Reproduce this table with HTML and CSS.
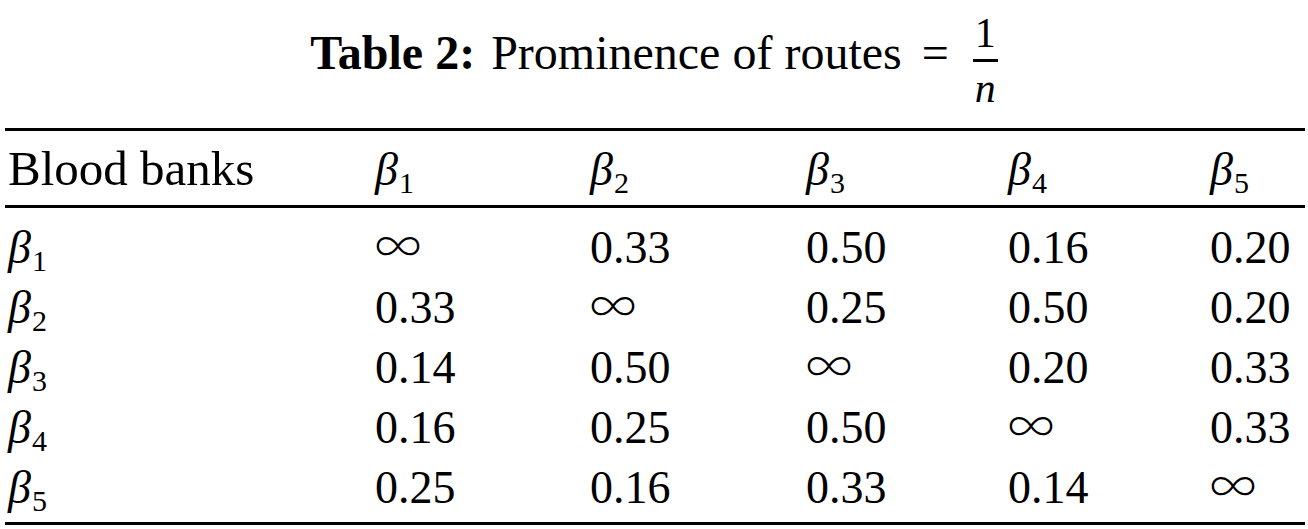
FILE: index.html
```html
<!DOCTYPE html>
<html lang="en">
<head>
<meta charset="utf-8">
<title>Table 2</title>
<link rel="stylesheet" href="styles.css">
</head>
<body>
<div class="page">
  <div class="caption">
    <span class="label">Table 2:</span>
    <span class="ctext">Prominence of routes</span>
    <span class="eq">=</span>
    <span class="frac"><span class="num">1</span><span class="den">n</span></span>
  </div>
  <table class="data">
    <thead>
      <tr>
        <th class="c1"><span class="word">Blood banks</span></th>
        <th class="c2"><i>β</i><sub>1</sub></th>
        <th class="c3"><i>β</i><sub>2</sub></th>
        <th class="c4"><i>β</i><sub>3</sub></th>
        <th class="c5"><i>β</i><sub>4</sub></th>
        <th class="c6"><i>β</i><sub>5</sub></th>
      </tr>
    </thead>
    <tbody>
      <tr class="first"><td><i>β</i><sub>1</sub></td><td><span class="inf">∞</span></td><td>0.33</td><td>0.50</td><td>0.16</td><td>0.20</td></tr>
      <tr><td><i>β</i><sub>2</sub></td><td>0.33</td><td><span class="inf">∞</span></td><td>0.25</td><td>0.50</td><td>0.20</td></tr>
      <tr><td><i>β</i><sub>3</sub></td><td>0.14</td><td>0.50</td><td><span class="inf">∞</span></td><td>0.20</td><td>0.33</td></tr>
      <tr><td><i>β</i><sub>4</sub></td><td>0.16</td><td>0.25</td><td>0.50</td><td><span class="inf">∞</span></td><td>0.33</td></tr>
      <tr class="last"><td><i>β</i><sub>5</sub></td><td>0.25</td><td>0.16</td><td>0.33</td><td>0.14</td><td><span class="inf">∞</span></td></tr>
    </tbody>
  </table>
</div>
</body>
</html>
```
FILE: styles.css
```css
html, body {
  margin: 0;
  padding: 0;
  background: #ffffff;
}
body {
  font-family: "Liberation Serif", "Times New Roman", serif;
  color: #000;
}
.page {
  width: 1308px;
}
.caption {
  height: 128px;
  box-sizing: border-box;
  padding-top: 19px;
  text-align: center;
  font-size: 48px;
  line-height: 60px;
  white-space: nowrap;
}
.label {
  font-weight: bold;
  margin-right: 4px;
}
.eq {
  margin: 0 12px 0 8px;
}
.frac {
  display: inline-flex;
  flex-direction: column;
  align-items: center;
  vertical-align: 22px;
  font-size: 42px;
}
.frac .num {
  display: block;
  line-height: 28px;
  padding: 0 2px 12px;
  border-bottom: 3px solid #000;
}
.frac .den {
  display: block;
  line-height: 28px;
  font-style: italic;
  padding-top: 12px;
}
.data {
  margin-left: 5px;
  width: 1300px;
  border-collapse: collapse;
  table-layout: fixed;
  font-size: 46px;
  line-height: 60px;
  border-top: 3px solid #000;
  border-bottom: 3px solid #000;
}
.data th, .data td {
  padding: 0;
  text-align: left;
  font-weight: normal;
  white-space: nowrap;
}
.data th {
  border-bottom: 3px solid #000;
  padding-top: 8px;
  padding-bottom: 5px;
}
.data .word {
  font-size: 49px;
}
.data tr.first td { padding-top: 10px; }
.data tr.last td { padding-bottom: 4px; }
.data .c1 { width: 367px; padding-left: 3px; }
.data .c2 { width: 215px; }
.data .c3 { width: 216px; }
.data .c4 { width: 202px; }
.data .c5 { width: 202px; }
.data .c6 { width: auto; }
.data td:first-child { padding-left: 3px; }
.data i {
  font-style: italic;
}
.data sub {
  font-size: 30px;
  vertical-align: -8px;
  line-height: 0;
  margin-left: 1px;
}
.data .inf {
  font-family: "Noto Sans CJK JP", "Liberation Serif", serif;
  font-weight: 300;
  font-size: 46px;
  line-height: 0;
  vertical-align: 0;
}
```
